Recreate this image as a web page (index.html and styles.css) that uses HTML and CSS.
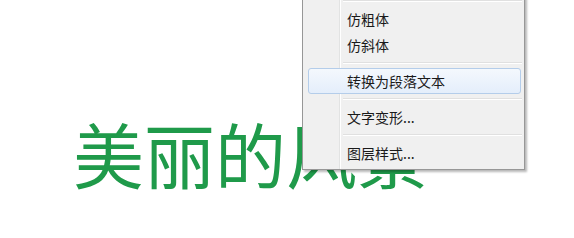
FILE: index.html
```html
<!DOCTYPE html>
<html lang="zh">
<head>
<meta charset="utf-8">
<link rel="stylesheet" href="styles.css">
</head>
<body>
<div class="canvas">
  <div class="title">美丽的风景</div>
  <div class="menu">
    <div class="sep"></div>
    <div class="item">仿粗体</div>
    <div class="item">仿斜体</div>
    <div class="sep"></div>
    <div class="item active">转换为段落文本</div>
    <div class="sep"></div>
    <div class="item">文字变形...</div>
    <div class="sep"></div>
    <div class="item">图层样式...</div>
  </div>
</div>
</body>
</html>
```
FILE: styles.css
```css
html, body {
  margin: 0;
  padding: 0;
  background: #fff;
}
.canvas {
  position: relative;
  width: 574px;
  height: 238px;
  overflow: hidden;
  font-family: "Noto Sans CJK SC", "Noto Sans", sans-serif;
}
.title {
  padding: 117px 0 0 73px;
  font-size: 71px;
  line-height: 1;
  color: #1f9a4a;
  letter-spacing: 0;
}
.menu {
  position: absolute;
  left: 302px;
  top: -4px;
  width: 217px;
  padding: 0 2px 3px 2px;
  background: #f0f0f0;
  border: 1px solid #979797;
  border-top: none;
  box-shadow: 2px 2px 2px rgba(0,0,0,0.28);
  background-image: linear-gradient(to right, transparent 36px, #e2e3e3 36px, #e2e3e3 37px, #ffffff 37px, #ffffff 38px, transparent 38px);
}
.sep {
  height: 10px;
  display: flex;
  flex-direction: column;
  justify-content: center;
  padding-left: 38px;
}
.sep::before {
  content: "";
  display: block;
  height: 1px;
  background: #e0e0e0;
  border-bottom: 1px solid #ffffff;
}
.item {
  height: 26px;
  line-height: 26px;
  padding-left: 42px;
  font-size: 14px;
  color: #1a1a1a;
  box-sizing: border-box;
}
.item.active {
  margin-left: 3px;
  margin-right: 1px;
  padding-left: 38px;
  line-height: 24px;
  border: 1px solid #b4cdea;
  border-radius: 3px;
  background: linear-gradient(to bottom, #f4f8fd, #e4eefb);
}
```
